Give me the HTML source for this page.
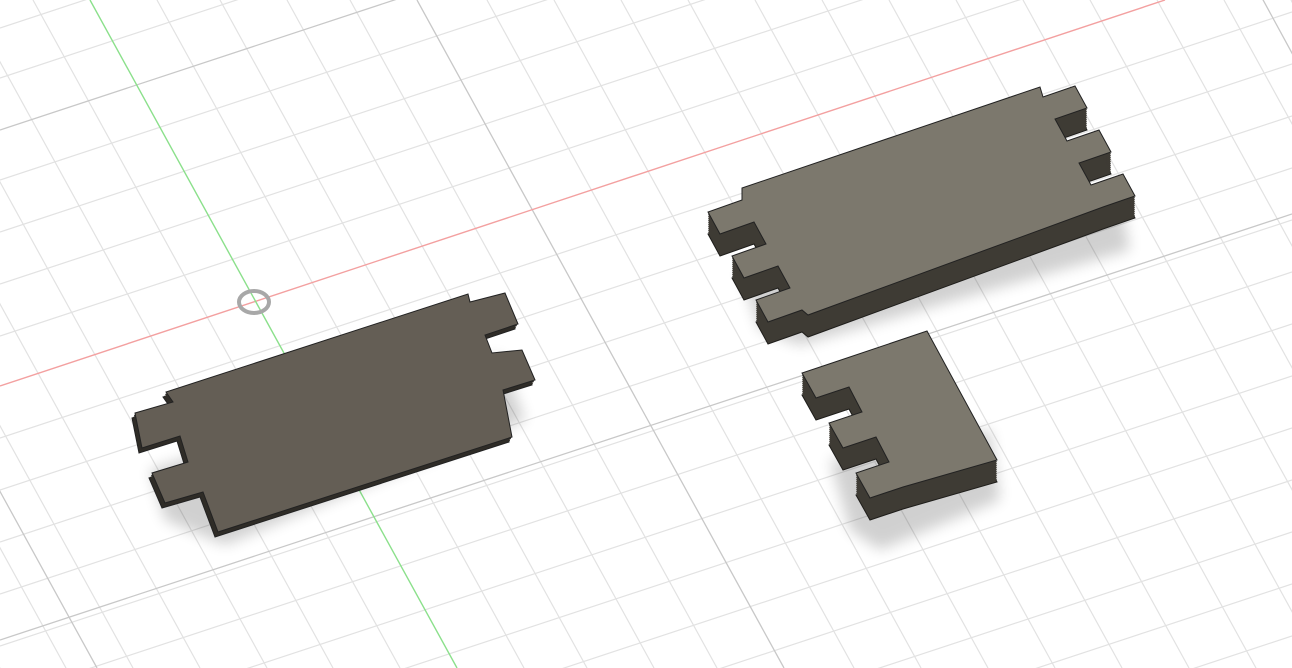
<!DOCTYPE html>
<html><head><meta charset="utf-8"><style>html,body{margin:0;padding:0;background:#fff;overflow:hidden;width:1292px;height:668px}svg{display:block}</style></head>
<body>
<svg width="1292" height="668" viewBox="0 0 1292 668" xmlns="http://www.w3.org/2000/svg">
<defs>
<filter id="b" x="-20%" y="-20%" width="140%" height="140%"><feGaussianBlur stdDeviation="7"/></filter>
<polygon id="L" points="135,413 173,402 166,392 468,294 470,302 505,293 518,324 485,335 492,353 522,350 535,380 503,390 512,437 218,532 203,492 165,503 152,473 188,462 180,436 142,448"/>
<polygon id="B" points="742,200 742,188 1040,87 1043,97 1075,86 1087,108 1055,119 1067,141 1099,130 1111,152 1079,163 1091,185 1123,174 1135,196 1103,207 808,315 802,310 768,322 756,300 790,288 778,266 744,278 732,256 766,244 754,222 720,234 708,212"/>
<polygon id="S" points="835,362 927,331 997,460 903,487 870,498 856,473 889,462 876,437 843,448 829,423 862,412 849,387 816,398 802,373"/>
</defs>
<g stroke="#e2e2e2" stroke-width="1.2" fill="none">
<path d="M0,28 L1292,-398 M0,78 L1292,-348 M0,180 L1292,-246 M0,232 L1292,-194 M0,284 L1292,-142 M0,336 L1292,-90 M0,438 L1292,12 M0,490 L1292,64 M0,542 L1292,116 M0,594 L1292,168 M0,646 L1292,220 M0,698 L1292,272 M0,750 L1292,324 M0,802 L1292,376 M0,854 L1292,428 M0,906 L1292,480 M0,958 L1292,532 M0,1010 L1292,584 M0,1062 L1292,636 M0,1114 L1292,688 M0,1166 L1292,740 M0,1218 L1292,792 M0,1270 L1292,844"/>
<path d="M-100,0 L267,668 M-34,0 L333,668 M33,0 L400,668 M157,0 L524,668 M220,0 L587,668 M287,0 L654,668 M350,0 L717,668 M487,0 L854,668 M554,0 L921,668 M621,0 L988,668 M688,0 L1055,668 M755,0 L1122,668 M822,0 L1189,668 M889,0 L1256,668 M956,0 L1323,668 M1023,0 L1390,668 M1090,0 L1457,668 M1157,0 L1524,668 M1224,0 L1591,668 M1291,0 L1658,668 M-167,0 L200,668 M-234,0 L133,668 M-301,0 L66,668 M-368,0 L0,668"/>
</g>
<g stroke="#c8c8c8" stroke-width="1.3" fill="none">
<path d="M0,130 L1292,-296 M0,640 L1292,214 M417,0 L784,668 M-270,0 L97,668 M1100,-300 L1660,730"/>
</g>
<line x1="0" y1="386" x2="1165" y2="0" stroke="#f3a0a0" stroke-width="1.4"/>
<line x1="90" y1="0" x2="457" y2="668" stroke="#8be08b" stroke-width="1.4"/>
<ellipse cx="254" cy="302" rx="15" ry="11" fill="none" stroke="#a8a8a8" stroke-width="4"/>

<g fill="#000" opacity="0.18" filter="url(#b)">
<polygon points="150,470 500,355 525,420 225,545 165,520"/>
<polygon points="740,270 1120,200 1130,250 800,345 760,330"/>
<polygon points="830,460 990,430 1000,500 880,550 850,530"/>
</g>

<!-- left piece -->
<g fill="#2f2c27" stroke="#222" stroke-width="1">
<use href="#L" transform="translate(-3,5)"/>
</g>
<g fill="#2f2c27">
<use href="#L" transform="translate(-1,2)"/><use href="#L" transform="translate(-2,4)"/>
</g>
<use href="#L" fill="#645e55" stroke="#222" stroke-width="1"/>

<!-- big piece -->
<use href="#B" transform="translate(0,22)" fill="#3e3b34" stroke="#1e1d1a" stroke-width="1"/>
<g fill="#3e3b34">
<use href="#B" transform="translate(0,2)"/><use href="#B" transform="translate(0,4)"/><use href="#B" transform="translate(0,6)"/><use href="#B" transform="translate(0,8)"/><use href="#B" transform="translate(0,10)"/><use href="#B" transform="translate(0,12)"/><use href="#B" transform="translate(0,14)"/><use href="#B" transform="translate(0,16)"/><use href="#B" transform="translate(0,18)"/><use href="#B" transform="translate(0,20)"/>
</g>
<use href="#B" fill="#7c786d" stroke="#222" stroke-width="1"/>

<!-- small piece -->
<use href="#S" transform="translate(0,22)" fill="#3e3b34" stroke="#1e1d1a" stroke-width="1"/>
<g fill="#3e3b34">
<use href="#S" transform="translate(0,2)"/><use href="#S" transform="translate(0,4)"/><use href="#S" transform="translate(0,6)"/><use href="#S" transform="translate(0,8)"/><use href="#S" transform="translate(0,10)"/><use href="#S" transform="translate(0,12)"/><use href="#S" transform="translate(0,14)"/><use href="#S" transform="translate(0,16)"/><use href="#S" transform="translate(0,18)"/><use href="#S" transform="translate(0,20)"/>
</g>
<use href="#S" fill="#7c786d" stroke="#222" stroke-width="1"/>
</svg>
</body></html>
